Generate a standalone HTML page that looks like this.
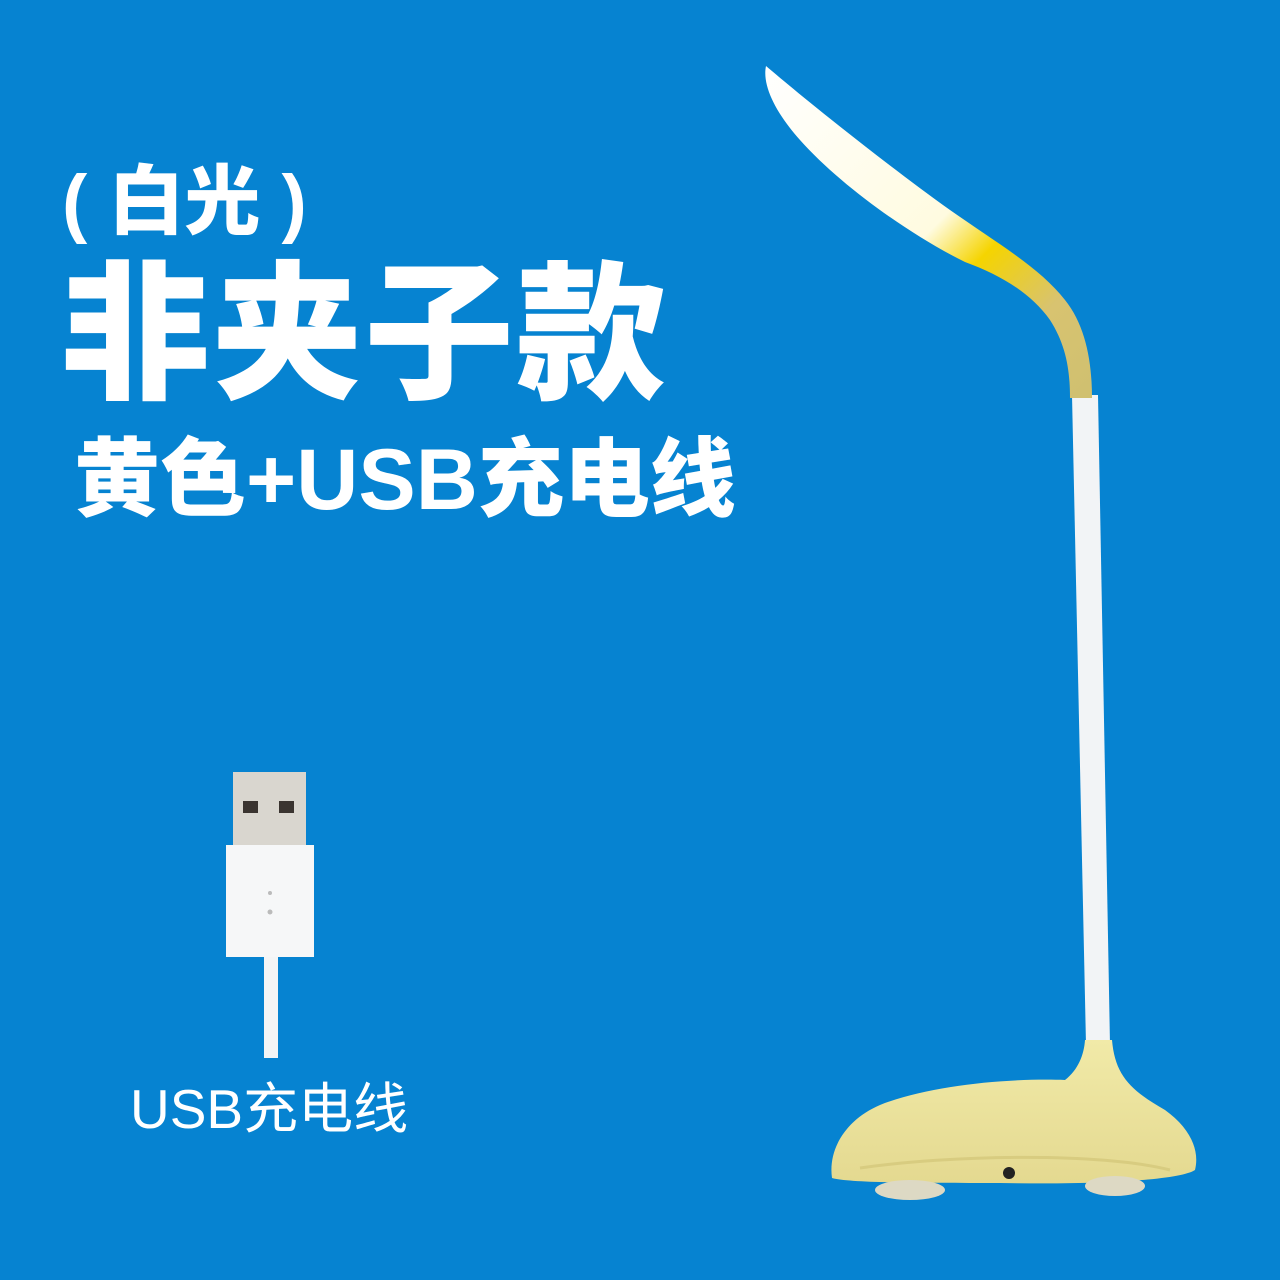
<!DOCTYPE html>
<html><head><meta charset="utf-8"><style>
body{margin:0;width:1280px;height:1280px;background:#0683d1;position:relative;overflow:hidden;font-family:"Liberation Sans","Noto Sans CJK SC",sans-serif;color:#fff}
.t{position:absolute;white-space:nowrap;font-weight:900}
</style></head><body>
<div class="t" style="left:62px;top:158px;font-size:76px;line-height:90px">(&nbsp;白光&nbsp;)</div>
<div class="t" style="left:60px;top:250px;font-size:150px;line-height:170px;letter-spacing:2px">非夹子款</div>
<div class="t" style="left:74px;top:430px;font-size:86px;line-height:100px;letter-spacing:0px">黄色+USB充电线</div>
<div class="t" style="left:130px;top:1078px;font-size:55px;line-height:62px;font-weight:400">USB充电线</div>
<svg width="1280" height="1280" style="position:absolute;left:0;top:0">
<defs>
<linearGradient id="h" x1="0" y1="0" x2="1" y2="1">
<stop offset="0" stop-color="#fff"/><stop offset="0.5" stop-color="#fffbe0"/><stop offset="0.62" stop-color="#f5d400"/><stop offset="0.8" stop-color="#d8c370"/><stop offset="1" stop-color="#cfc070"/></linearGradient>
<linearGradient id="b" x1="0" y1="0" x2="0" y2="1"><stop offset="0" stop-color="#f1eaa8"/><stop offset="1" stop-color="#e4d990"/></linearGradient>
</defs>
<path d="M1072 395 L1098 395 L1110 1045 L1086 1045 Z" fill="#f2f4f6"/>
<path d="M766 66 C800 95 880 160 950 210 C1000 245 1040 268 1065 300 C1085 325 1092 360 1092 398 L1070 398 C1070 370 1066 345 1050 320 C1030 292 1000 275 965 262 C910 235 840 185 800 140 C775 112 762 85 766 66 Z" fill="url(#h)"/>
<path d="M1085 1040 L1112 1040 C1115 1075 1130 1090 1165 1110 C1190 1128 1200 1150 1195 1170 C1180 1180 1100 1185 1000 1183 C920 1183 850 1183 832 1178 C828 1150 845 1120 880 1105 C930 1085 1010 1078 1065 1080 C1078 1070 1084 1055 1085 1040 Z" fill="url(#b)"/>
<ellipse cx="910" cy="1190" rx="35" ry="10" fill="#ddd9c4"/>
<ellipse cx="1115" cy="1186" rx="30" ry="10" fill="#ddd9c4"/>
<path d="M860 1168 C950 1155 1100 1152 1170 1170" stroke="#d8cc80" stroke-width="3" fill="none"/>
<circle cx="1009" cy="1173" r="6" fill="#222"/>
<rect x="233" y="772" width="73" height="74" fill="#d9d6cf"/>
<rect x="243" y="801" width="15" height="12" fill="#3a3430"/>
<rect x="279" y="801" width="15" height="12" fill="#3a3430"/>
<rect x="226" y="845" width="88" height="112" fill="#f6f7f8"/>
<rect x="264" y="957" width="14" height="101" fill="#f4f5f6"/>
<circle cx="270" cy="893" r="2" fill="#bbb"/><circle cx="270" cy="912" r="2.5" fill="#bbb"/>
</svg>
</body></html>
